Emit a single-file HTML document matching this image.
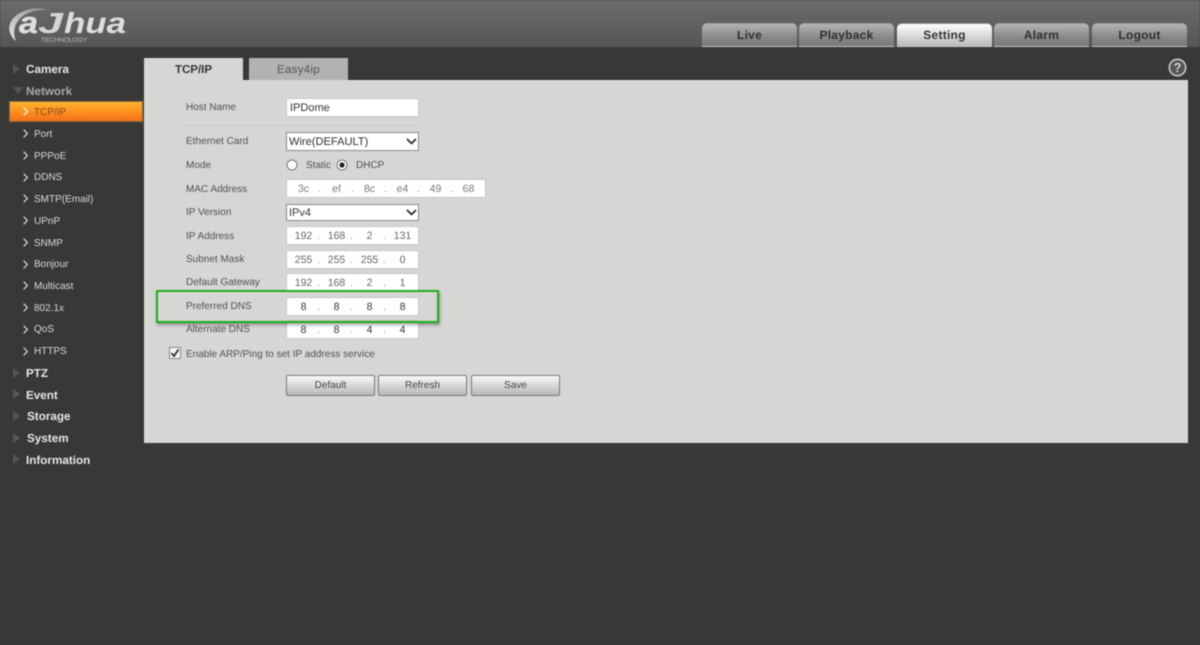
<!DOCTYPE html>
<html><head><meta charset="utf-8"><title>Dahua Setting</title>
<style>
html,body{margin:0;padding:0;width:1200px;height:645px;overflow:hidden;background:#383836}
#w{position:relative;width:1200px;height:645px;overflow:hidden;font-family:"Liberation Sans",sans-serif;background:#383836;filter:blur(.45px);text-rendering:geometricPrecision}
#w div,#w svg{position:absolute}
.hd{left:0;top:0;width:1200px;height:47px;background:linear-gradient(#6b6b69,#565654)}
.tab{top:23px;width:95px;height:24px;box-sizing:border-box;border-radius:5px 5px 0 0;background:linear-gradient(#b4b4b2 0,#8c8c8a 55%,#767674);border-top:1px solid #9a9a98;border-bottom:1px solid #c8c8c6;text-align:center;font-size:12px;font-weight:bold;line-height:23px;color:#303030;letter-spacing:.25px}
.tab.on{background:linear-gradient(#fff 0,#dedcdc 50%,#bcb8b8);color:#333}
.m{left:26px;font-size:11.7px;font-weight:bold;color:#e6e6e6;line-height:14px;height:14px;white-space:nowrap;margin-top:1px}
.tri{left:13px;width:0;height:0;border-left:7px solid #555553;border-top:5px solid transparent;border-bottom:5px solid transparent}
.s{left:34px;font-size:10px;color:#d8d8d8;line-height:14px;height:14px;white-space:nowrap;margin-top:1px}
.chev{left:23px;width:5px;height:9px}
.l{left:186px;font-size:10px;color:#505050;line-height:14px;height:14px;white-space:nowrap;margin-top:1px}
.i{left:286px;width:133px;height:19px;box-sizing:border-box;background:#fff;border:1px solid #c6c6c4;font-size:10.5px;color:#333;line-height:19px}
.o{top:1px;text-align:center;font-size:10.5px;color:#666;line-height:17px;height:17px}
.d{top:0;font-size:10.5px;color:#888;line-height:18px;height:17px}
.btn{top:375px;height:21px;box-sizing:border-box;border:1px solid #7a7a78;border-radius:2px;background:linear-gradient(#fafafa,#d4d4d4 55%,#b8b8b8);text-align:center;font-size:10px;line-height:19px;color:#444}
</style></head><body><div id="w">
<div class="hd"></div>
<svg style="left:0;top:0" width="140" height="47" viewBox="0 0 140 47">
<defs><linearGradient id="g" x1="0" y1="1" x2="1" y2="0"><stop offset="0" stop-color="#e4e4e2"/><stop offset=".6" stop-color="#b0b0ae"/><stop offset="1" stop-color="#8a8a88"/></linearGradient></defs>
<path d="M16 41C6 33 7 20 20 13 28 8 40 7 50 10 40 9 30 11 23 16 15 22 12 31 16 41Z" fill="url(#g)"/>
<text x="19" y="33" font-family="Liberation Sans" font-style="italic" font-weight="bold" font-size="30" fill="#dededc" stroke="#dededc" stroke-width=".4" textLength="19" lengthAdjust="spacingAndGlyphs">a</text>
<text x="38" y="33" font-family="Liberation Sans" font-style="italic" font-weight="bold" font-size="29" fill="#d4d4d2" textLength="25" lengthAdjust="spacingAndGlyphs">J</text>
<text x="64" y="33" font-family="Liberation Sans" font-style="italic" font-weight="bold" font-size="29" fill="#dededc" textLength="62" lengthAdjust="spacingAndGlyphs">hua</text>
<text x="41" y="42" font-family="Liberation Sans" font-size="6.6" fill="#bdbdbb">TECHNOLOGY</text>
</svg>

<div class="tab" style="left:702px">Live</div>
<div class="tab" style="left:799px">Playback</div>
<div class="tab on" style="left:897px">Setting</div>
<div class="tab" style="left:994px">Alarm</div>
<div class="tab" style="left:1092px">Logout</div>

<div class="tri" style="top:64px"></div><div class="m" style="top:62px">Camera</div>
<div style="left:13px;top:87px;width:0;height:0;border-top:7px solid #555553;border-left:5px solid transparent;border-right:5px solid transparent"></div><div class="m" style="top:84px;color:#a8a8a8">Network</div>
<div style="left:9px;top:101px;width:134px;height:21px;box-sizing:border-box;border:1px solid #8a6a3a;background:linear-gradient(#ffb52e,#ff8a1e 60%,#f0701a)"></div>
<svg class="chev" style="top:107px" viewBox="0 0 5 9"><path d="M.7.7L4.3 4.5.7 8.3" fill="none" stroke="#fff" stroke-width="1.2"/></svg><div class="s" style="top:105px;color:#7a4a20">TCP/IP</div>
<svg class="chev" style="top:129px" viewBox="0 0 5 9"><path d="M.7.7L4.3 4.5.7 8.3" fill="none" stroke="#ddd" stroke-width="1.2"/></svg><div class="s" style="top:127px">Port</div>
<svg class="chev" style="top:151px" viewBox="0 0 5 9"><path d="M.7.7L4.3 4.5.7 8.3" fill="none" stroke="#ddd" stroke-width="1.2"/></svg><div class="s" style="top:149px">PPPoE</div>
<svg class="chev" style="top:173px" viewBox="0 0 5 9"><path d="M.7.7L4.3 4.5.7 8.3" fill="none" stroke="#ddd" stroke-width="1.2"/></svg><div class="s" style="top:170px">DDNS</div>
<svg class="chev" style="top:194px" viewBox="0 0 5 9"><path d="M.7.7L4.3 4.5.7 8.3" fill="none" stroke="#ddd" stroke-width="1.2"/></svg><div class="s" style="top:192px">SMTP(Email)</div>
<svg class="chev" style="top:216px" viewBox="0 0 5 9"><path d="M.7.7L4.3 4.5.7 8.3" fill="none" stroke="#ddd" stroke-width="1.2"/></svg><div class="s" style="top:214px">UPnP</div>
<svg class="chev" style="top:238px" viewBox="0 0 5 9"><path d="M.7.7L4.3 4.5.7 8.3" fill="none" stroke="#ddd" stroke-width="1.2"/></svg><div class="s" style="top:236px">SNMP</div>
<svg class="chev" style="top:260px" viewBox="0 0 5 9"><path d="M.7.7L4.3 4.5.7 8.3" fill="none" stroke="#ddd" stroke-width="1.2"/></svg><div class="s" style="top:257px">Bonjour</div>
<svg class="chev" style="top:281px" viewBox="0 0 5 9"><path d="M.7.7L4.3 4.5.7 8.3" fill="none" stroke="#ddd" stroke-width="1.2"/></svg><div class="s" style="top:279px">Multicast</div>
<svg class="chev" style="top:303px" viewBox="0 0 5 9"><path d="M.7.7L4.3 4.5.7 8.3" fill="none" stroke="#ddd" stroke-width="1.2"/></svg><div class="s" style="top:301px">802.1x</div>
<svg class="chev" style="top:325px" viewBox="0 0 5 9"><path d="M.7.7L4.3 4.5.7 8.3" fill="none" stroke="#ddd" stroke-width="1.2"/></svg><div class="s" style="top:322px">QoS</div>
<svg class="chev" style="top:347px" viewBox="0 0 5 9"><path d="M.7.7L4.3 4.5.7 8.3" fill="none" stroke="#ddd" stroke-width="1.2"/></svg><div class="s" style="top:344px">HTTPS</div>
<div class="tri" style="top:368px"></div><div class="m" style="top:366px">PTZ</div>
<div class="tri" style="top:389px"></div><div class="m" style="top:388px">Event</div>
<div class="tri" style="top:411px"></div><div class="m" style="top:409px;left:27px">Storage</div>
<div class="tri" style="top:433px"></div><div class="m" style="top:431px;left:27px">System</div>
<div class="tri" style="top:454px"></div><div class="m" style="top:453px">Information</div>

<div style="left:144px;top:80px;width:1044px;height:363px;background:#d6d6d4"></div>
<div style="left:144px;top:58px;width:99px;height:24px;background:#d6d6d4;text-align:center;font-size:11.5px;font-weight:bold;line-height:24px;color:#333">TCP/IP</div>
<div style="left:249px;top:58px;width:99px;height:22px;background:#b2b2b0;text-align:center;font-size:11.5px;line-height:24px;color:#555;letter-spacing:.3px">Easy4ip</div>
<svg style="left:1168px;top:58px" width="19" height="19" viewBox="0 0 19 19"><circle cx="9.5" cy="9.5" r="8.2" fill="#555553" stroke="#c8c8c6" stroke-width="1.6"/><text x="9.5" y="14" text-anchor="middle" font-family="Liberation Sans" font-weight="bold" font-size="13" fill="#d0d0ce">?</text></svg>

<div class="l" style="top:100px">Host Name</div>
<div class="i" style="top:98px;color:#333;padding-left:3px;font-size:11px">IPDome</div>
<div style="left:186px;top:125px;width:235px;height:1px;background:#c8c8c6"></div>

<div class="l" style="top:134px">Ethernet Card</div>
<div class="i" style="top:132px;border-color:#8a8a88;padding-left:2px;font-size:11.1px">Wire(DEFAULT)<svg style="left:119px;top:5px" width="11" height="7" viewBox="0 0 11 7"><path d="M1 1l4.5 4.5L10 1" fill="none" stroke="#222" stroke-width="1.6"/></svg></div>

<div class="l" style="top:158px">Mode</div>
<svg style="left:286px;top:159px" width="12" height="12" viewBox="0 0 12 12"><circle cx="6" cy="6" r="5" fill="#fff" stroke="#777"/></svg>
<div class="l" style="left:306px;top:158px">Static</div>
<svg style="left:336px;top:159px" width="12" height="12" viewBox="0 0 12 12"><circle cx="6" cy="6" r="5" fill="#fff" stroke="#777"/><circle cx="6" cy="6" r="2.6" fill="#222"/></svg>
<div class="l" style="left:356px;top:158px">DHCP</div>

<div class="l" style="top:182px">MAC Address</div>
<div class="i" style="top:179px;width:200px;height:19px"><div class="o" style="left:0;width:33px;color:#777">3c</div><div class="d" style="left:31px">.</div><div class="o" style="left:33px;width:33px;color:#777">ef</div><div class="d" style="left:64px">.</div><div class="o" style="left:66px;width:33px;color:#777">8c</div><div class="d" style="left:97px">.</div><div class="o" style="left:99px;width:33px;color:#777">e4</div><div class="d" style="left:130px">.</div><div class="o" style="left:132px;width:33px;color:#777">49</div><div class="d" style="left:163px">.</div><div class="o" style="left:165px;width:33px;color:#777">68</div></div>

<div class="l" style="top:205px">IP Version</div>
<div class="i" style="top:204px;height:17px;border-color:#8a8a88;padding-left:2px;line-height:17px;font-size:11px">IPv4<svg style="left:119px;top:4px" width="11" height="7" viewBox="0 0 11 7"><path d="M1 1l4.5 4.5L10 1" fill="none" stroke="#222" stroke-width="1.6"/></svg></div>

<div class="l" style="top:229px">IP Address</div>
<div class="i" style="top:226px"><div class="o" style="left:0;width:33px">192</div><div class="d" style="left:30px">.</div><div class="o" style="left:33px;width:33px">168</div><div class="d" style="left:63px">.</div><div class="o" style="left:66px;width:33px">2</div><div class="d" style="left:96px">.</div><div class="o" style="left:99px;width:33px">131</div></div>

<div class="l" style="top:252px">Subnet Mask</div>
<div class="i" style="top:250px"><div class="o" style="left:0;width:33px">255</div><div class="d" style="left:30px">.</div><div class="o" style="left:33px;width:33px">255</div><div class="d" style="left:63px">.</div><div class="o" style="left:66px;width:33px">255</div><div class="d" style="left:96px">.</div><div class="o" style="left:99px;width:33px">0</div></div>

<div class="l" style="top:275px">Default Gateway</div>
<div class="i" style="top:273px"><div class="o" style="left:0;width:33px">192</div><div class="d" style="left:30px">.</div><div class="o" style="left:33px;width:33px">168</div><div class="d" style="left:63px">.</div><div class="o" style="left:66px;width:33px">2</div><div class="d" style="left:96px">.</div><div class="o" style="left:99px;width:33px">1</div></div>

<div class="l" style="top:299px">Preferred DNS</div>
<div class="i" style="top:297px"><div class="o" style="left:0;width:33px;color:#333">8</div><div class="d" style="left:30px">.</div><div class="o" style="left:33px;width:33px;color:#333">8</div><div class="d" style="left:63px">.</div><div class="o" style="left:66px;width:33px;color:#333">8</div><div class="d" style="left:96px">.</div><div class="o" style="left:99px;width:33px;color:#333">8</div></div>

<div class="l" style="top:322px">Alternate DNS</div>
<div class="i" style="top:320px"><div class="o" style="left:0;width:33px;color:#333">8</div><div class="d" style="left:30px">.</div><div class="o" style="left:33px;width:33px;color:#333">8</div><div class="d" style="left:63px">.</div><div class="o" style="left:66px;width:33px;color:#333">4</div><div class="d" style="left:96px">.</div><div class="o" style="left:99px;width:33px;color:#333">4</div></div>

<div style="left:156px;top:290px;width:283px;height:33px;box-sizing:border-box;border:2px solid #1cb01c;box-shadow:1px 2px 3px rgba(0,0,0,.35)"></div>

<svg style="left:169px;top:347px" width="12" height="12" viewBox="0 0 12 12"><rect x=".5" y=".5" width="11" height="11" fill="#f4f4f4" stroke="#888"/><path d="M2.5 6l2.5 3 4.5-6.5" fill="none" stroke="#222" stroke-width="1.6"/></svg>
<div class="l" style="top:347px">Enable ARP/Ping to set IP address service</div>

<div class="btn" style="left:286px;width:89px">Default</div>
<div class="btn" style="left:378px;width:89px">Refresh</div>
<div class="btn" style="left:471px;width:89px">Save</div>
</div></body></html>
